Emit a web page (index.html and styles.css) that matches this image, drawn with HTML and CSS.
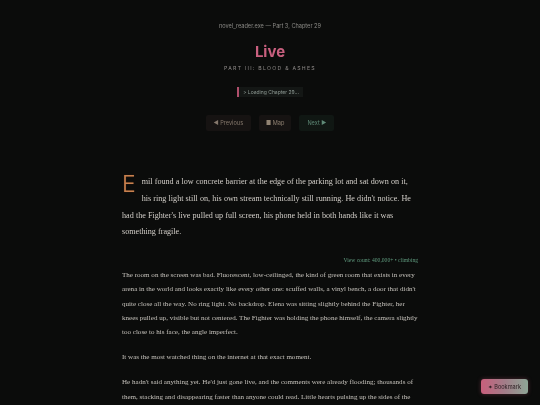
FILE: index.html
```html
<!DOCTYPE html>
<html lang="en">
<head>
<meta charset="utf-8">
<title>Live — Part 3, Chapter 29</title>
<link rel="stylesheet" href="styles.css">
</head>
<body>
<main class="page">
  <header class="head">
    <div class="meta">novel_reader.exe — Part 3, Chapter 29</div>
    <h1 class="title">Live</h1>
    <div class="part">PART III: BLOOD &amp; ASHES</div>
    <div class="loading">&gt; Loading Chapter 29...</div>
    <nav class="nav">
      <a class="btn btn-prev">◀ Previous</a>
      <a class="btn btn-map">■ Map</a>
      <a class="btn btn-next">Next ▶</a>
    </nav>
  </header>
  <article class="story">
    <p class="lead"><span class="dropcap">E</span>mil found a low concrete barrier at the edge of the parking lot and sat down on it, his ring light still on, his own stream technically still running. He didn't notice. He had the Fighter's live pulled up full screen, his phone held in both hands like it was something fragile.</p>
    <div class="views">View count: 400,000+ • climbing</div>
    <p>The room on the screen was bad. Fluorescent, low-ceilinged, the kind of green room that exists in every arena in the world and looks exactly like every other one: scuffed walls, a vinyl bench, a door that didn't quite close all the way. No ring light. No backdrop. Elena was sitting slightly behind the Fighter, her knees pulled up, visible but not centered. The Fighter was holding the phone himself, the camera slightly too close to his face, the angle imperfect.</p>
    <p>It was the most watched thing on the internet at that exact moment.</p>
    <p>He hadn't said anything yet. He'd just gone live, and the comments were already flooding; thousands of them, stacking and disappearing faster than anyone could read. Little hearts pulsing up the sides of the screen.</p>
  </article>
</main>
<button class="bookmark">✦ Bookmark</button>
</body>
</html>
```

FILE: styles.css
```css
html, body {
  margin: 0;
  padding: 0;
  background: #0b0c0b;
}
body {
  font-family: Inter, "DejaVu Sans", sans-serif;
  color: #cfcac4;
  overflow: hidden;
  height: 405px;
  -webkit-font-smoothing: antialiased;
}
.page {
  width: 296px;
  margin: 0 auto;
  padding-top: 22px;
  will-change: transform;
}
.head {
  display: flex;
  flex-direction: column;
  align-items: center;
}
.meta {
  font-size: 5.6px;
  line-height: 8px;
  color: #8c8b87;
}
.title {
  margin: 13px 0 0;
  font-size: 15px;
  line-height: 18px;
  font-weight: 700;
  color: #c9607f;
}
.part {
  margin-top: 4px;
  font-size: 5.2px;
  line-height: 7px;
  letter-spacing: 1.25px;
  color: #8e8a88;
}
.loading {
  margin-top: 15px;
  height: 10px;
  padding: 0 4px 0 4px;
  border-left: 2px solid #b04f6c;
  background: #141715;
  font-size: 5px;
  line-height: 10px;
  color: #8e9a94;
}
.nav {
  display: flex;
  gap: 8px;
  margin-top: 18px;
}
.btn {
  display: block;
  height: 16px;
  line-height: 16px;
  padding: 0 8px;
  border-radius: 2px;
  font-size: 5.6px;
  text-decoration: none;
}
.btn-prev {
  background: #161312;
  color: #85786c;
}
.btn-map {
  background: #161312;
  color: #918373;
  padding: 0 7px;
}
.btn-next {
  background: #101713;
  color: #5f8a77;
}
.story {
  margin-top: 43px;
  font-family: "Liberation Serif", "DejaVu Serif", serif;
}
.story p {
  margin: 11px 0;
  font-size: 7.05px;
  line-height: 14.2px;
  color: #c4c0ba;
}
.story p.lead {
  margin: 0;
  font-size: 8.15px;
  line-height: 16.8px;
  word-spacing: 0.12px;
  color: #d2cec8;
}
.dropcap {
  float: left;
  font-family: Inter, "DejaVu Sans", sans-serif;
  font-weight: 300;
  font-size: 23px;
  line-height: 20px;
  margin: 0 6px 9px 0;
  color: #c8814f;
  text-shadow: 0 0 1px #5a3016;
}
.views {
  margin-top: 15px;
  text-align: right;
  font-size: 5.6px;
  line-height: 8px;
  color: #5f9a7e;
}
.story .views + p {
  margin-top: 4px;
}
.bookmark {
  position: fixed;
  right: 12px;
  bottom: 11px;
  height: 15px;
  padding: 0 7px;
  border: 0;
  border-radius: 3px;
  background: linear-gradient(90deg, #c85f7c 0%, #a27c88 50%, #8ea596 100%);
  box-shadow: 0 0 4px rgba(200, 95, 124, 0.35);
  font-family: Inter, "DejaVu Sans", sans-serif;
  font-size: 5.6px;
  color: #2a1c20;
}
```
